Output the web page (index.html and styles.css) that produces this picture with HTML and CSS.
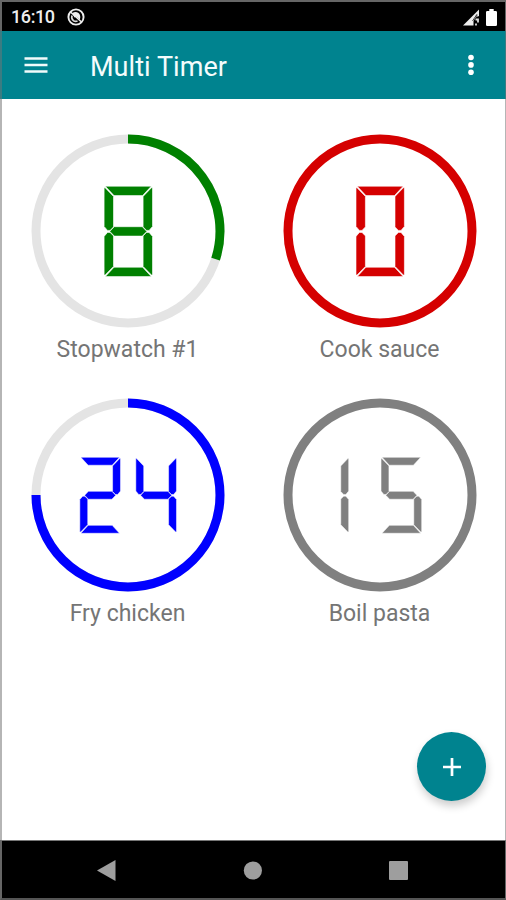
FILE: index.html
```html
<!DOCTYPE html>
<html lang="en">
<head>
<meta charset="utf-8">
<title>Multi Timer</title>
<link rel="stylesheet" href="styles.css">
</head>
<body>
<svg class="defs" aria-hidden="true">
  <defs>
    <path id="a" d="M1 -.2H47L38.3 9.2H9.7Z"/>
    <path id="b" d="M48.2 1.3V40L44.8 44H42.2L38.8 40.5V10L47.2 1.3Z"/>
    <path id="c" d="M48.2 88.7V50L44.8 46H42.2L38.8 49.5V80L47.2 88.7Z"/>
    <path id="d" d="M1 90.2H47L38.3 80.8H9.7Z"/>
    <path id="e" d="M-.2 88.7V50L3.2 46H5.8L9.2 49.5V80L.8 88.7Z"/>
    <path id="f" d="M-.2 1.3V40L3.2 44H5.8L9.2 40.5V10L.8 1.3Z"/>
    <path id="g" d="M5.5 45L10 40.3H38L42.5 45L38 49.7H10Z"/>
  </defs>
</svg>
<div class="screen">
  <div class="status">
    <span class="clock">16:10</span>
    <svg class="dnd" width="18" height="18" viewBox="0 0 18 18"><circle cx="9" cy="9" r="7.6" fill="none" stroke="#eee" stroke-width="1.9"/><path d="M5.2 5.2Q8.5 3 11.5 5Q14.2 7.5 12.8 11.8L9.5 8.8L7.5 9.5Z" fill="#eee"/><path d="M5 7.5Q4 11 6.5 12.7Q8.5 13.8 10.5 13" fill="none" stroke="#ddd" stroke-width="1.6"/><path d="M3.5 4L14.5 14" stroke="#eee" stroke-width="1.5"/></svg>
    <svg class="signal" width="17" height="17" viewBox="0 0 17 17"><path d="M0 16.5L16 .5V7L12.5 8.5L10.5 12V16.5Z" fill="#eee"/><path d="M9.5 12L13.8 5.5V8" fill="none" stroke="#333" stroke-width=".9"/><path d="M12.5 10.5H15V13.5M13 14.5V16.5" fill="none" stroke="#ddd" stroke-width="1.8"/></svg>
    <svg class="battery" width="11" height="17" viewBox="0 0 11 17"><path d="M3.3 0H7.7V2H9.7Q11 2 11 3.3V15.7Q11 17 9.7 17H1.3Q0 17 0 15.7V3.3Q0 2 1.3 2H3.3Z" fill="#fff"/></svg>
  </div>
  <header class="bar">
    <svg class="menu" width="24" height="16" viewBox="0 0 24 16"><path d="M.5 1.6H23.500M.5 8H23.500M.5 14.4H23.500" stroke="#f1fbfb" stroke-width="2.5"/></svg>
    <h1 class="title">Multi Timer</h1>
    <svg class="more" width="6" height="22" viewBox="0 0 6 22" fill="#fff"><circle cx="3" cy="3.5" r="2.8"/><circle cx="3" cy="10.9" r="2.8"/><circle cx="3" cy="18.3" r="2.8"/></svg>
  </header>
  <main class="timers">
    <section class="timer">
      <svg class="dial green" viewBox="0 0 194 194">
        <circle class="track" cx="97" cy="97" r="92"/>
        <path class="arc" d="M97 5A92 92 0 0 1 184.6 125.1"/>
        <g transform="translate(73.3 52.4)"><use href="#a"/><use href="#b"/><use href="#c"/><use href="#d"/><use href="#e"/><use href="#f"/><use href="#g"/></g>
      </svg>
      <p class="label">Stopwatch #1</p>
    </section>
    <section class="timer">
      <svg class="dial red" viewBox="0 0 194 194">
        <circle class="arc" cx="97" cy="97" r="92"/>
        <g transform="translate(73.2 52.4)"><use href="#a"/><use href="#b"/><use href="#c"/><use href="#d"/><use href="#e"/><use href="#f"/></g>
      </svg>
      <p class="label">Cook sauce</p>
    </section>
    <section class="timer">
      <svg class="dial blue" viewBox="0 0 194 194">
        <circle class="track" cx="97" cy="97" r="92"/>
        <path class="arc" d="M97 5A92 92 0 1 1 5 97"/>
        <g transform="translate(49 59.5) scale(.84)"><use href="#a"/><use href="#b"/><use href="#d"/><use href="#e"/><use href="#g"/></g>
        <g transform="translate(105 59.5) scale(.84)"><use href="#b"/><use href="#c"/><use href="#f"/><use href="#g"/></g>
      </svg>
      <p class="label">Fry chicken</p>
    </section>
    <section class="timer">
      <svg class="dial gray" viewBox="0 0 194 194">
        <circle class="arc" cx="97" cy="97" r="92"/>
        <g transform="translate(25.2 59.5) scale(.84)"><use href="#b"/><use href="#c"/></g>
        <g transform="translate(98.2 59.5) scale(.84)"><use href="#a"/><use href="#c"/><use href="#d"/><use href="#f"/><use href="#g"/></g>
      </svg>
      <p class="label">Boil pasta</p>
    </section>
  </main>
  <button class="fab" aria-label="Add timer"><svg width="18" height="18" viewBox="0 0 18 18"><path d="M0 9H18M9 0V18" stroke="#fff" stroke-width="2.7"/></svg></button>
  <nav class="nav">
    <svg width="19" height="21" viewBox="0 0 19 21"><path d="M0 10.5L18.5 0V21Z"/></svg>
    <svg width="19" height="19" viewBox="0 0 19 19"><circle cx="9.9" cy="9.5" r="9.1"/></svg>
    <svg width="19" height="19" viewBox="0 0 19 19"><rect width="19" height="19" rx="1"/></svg>
  </nav>
</div>
</body>
</html>
```
FILE: styles.css
```css
* { box-sizing: border-box; }
body { margin: 0; font-family: Roboto, "Liberation Sans", sans-serif; background: #fff; }
.defs { display: none; }
.screen { position: relative; display: flex; flex-direction: column; width: 506px; height: 900px; overflow: hidden; }
.status, .bar, .timers, .nav { border-left: 2px solid #666; border-right: 1px solid #666; }
.status { display: flex; align-items: center; height: 31px; padding: 1px 8px 0 9px; border-top: 2px solid #666; background: #000; }
.clock { width: 45px; color: #eee; font-size: 18px; font-weight: 500; line-height: 20px; letter-spacing: -.4px; }
.dnd { margin-left: 11px; }
.signal { margin-left: auto; }
.battery { margin-left: 6px; }
.bar { display: flex; align-items: center; height: 68px; padding: 0 31px 0 22px; border-left-color: #3b7c82; border-right-color: #3b7c82; background: #00838f; }
.title { margin: 4px 0 0 42px; color: #f4fcfc; font-size: 27px; font-weight: 400; line-height: 32px; letter-spacing: .05px; }
.more { margin-left: auto; }
.timers { display: grid; grid-template-columns: 251px 253px; grid-auto-rows: 264px; flex: 1; padding-top: 35px; border-left-color: #b5b5b5; border-right-color: #b5b5b5; }
.timer { display: flex; flex-direction: column; align-items: center; }
.dial { width: 194px; height: 194px; fill: currentColor; }
.track { fill: none; stroke: #e4e4e4; stroke-width: 9; }
.arc { fill: none; stroke: currentColor; stroke-width: 9; }
use { stroke: #fff; stroke-width: .6; }
.green { color: #008000; }
.red { color: #d50000; }
.blue { color: #00f; }
.gray { color: #808080; }
.label { margin: 8px 0 0; color: #757575; font-size: 23px; line-height: 28px; }
.fab { position: absolute; right: 20px; bottom: 99px; display: flex; align-items: center; justify-content: center; width: 69px; height: 69px; padding: 0; border: 0; border-radius: 50%; background: #00838f; box-shadow: 1px 5px 9px rgba(0, 0, 0, .2); }
.nav { display: flex; align-items: center; justify-content: space-between; height: 60px; padding: 1px 97px 0 95px; border-top: 1px solid #777; border-bottom: 2px solid #555; background: #000; fill: #9e9e9e; }
```
